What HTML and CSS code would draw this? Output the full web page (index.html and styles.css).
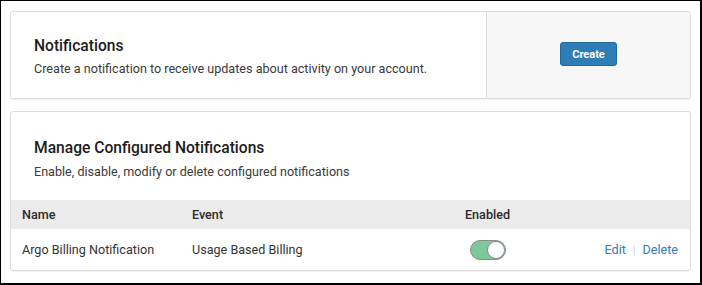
FILE: index.html
```html
<!DOCTYPE html>
<html>
<head>
<meta charset="utf-8">
<link rel="stylesheet" href="styles.css">
</head>
<body>
<div class="frame">
  <section class="card intro">
    <div class="intro-main">
      <h2 class="title">Notifications</h2>
      <p class="desc">Create a notification to receive updates about activity on your account.</p>
    </div>
    <div class="intro-side">
      <button class="btn">Create</button>
    </div>
  </section>
  <section class="card manage">
    <div class="manage-head">
      <h2 class="title">Manage Configured Notifications</h2>
      <p class="desc">Enable, disable, modify or delete configured notifications</p>
    </div>
    <div class="table">
      <div class="row header">
        <div class="c-name">Name</div>
        <div class="c-event">Event</div>
        <div class="c-enabled">Enabled</div>
        <div class="c-actions"></div>
      </div>
      <div class="row">
        <div class="c-name">Argo Billing Notification</div>
        <div class="c-event">Usage Based Billing</div>
        <div class="c-enabled"><span class="toggle"><span class="knob"></span></span></div>
        <div class="c-actions"><a class="link">Edit</a><span class="sep">|</span><a class="link">Delete</a></div>
      </div>
    </div>
  </section>
</div>
</body>
</html>
```

FILE: styles.css
```css
* { box-sizing: border-box; }
html, body { margin: 0; padding: 0; background: #fff; }
body {
  font-family: Roboto, "Liberation Sans", Arial, sans-serif;
  color: #333;
}
.frame {
  width: 702px;
  height: 285px;
  border-style: solid;
  border-color: #000;
  border-width: 1px 2px 2px 1px;
  padding: 10px 9px 0 9px;
  display: flex;
  flex-direction: column;
  gap: 12px;
}
.card {
  background: #fff;
  border: 1px solid #dcdcdc;
  border-radius: 3px;
  box-shadow: 0 1px 1px rgba(0,0,0,0.06);
  overflow: hidden;
}
.intro {
  display: flex;
  height: 88px;
}
.intro-main {
  flex: 1;
  padding: 24px 24px 0 23px;
}
.intro-side {
  width: 204px;
  background: #f7f7f7;
  border-left: 1px solid #dcdcdc;
  display: flex;
  align-items: flex-start;
  justify-content: center;
  padding-top: 30px;
}
.title {
  margin: 0;
  font-size: 15.6px;
  font-weight: 500;
  color: #1c1c1c;
  line-height: 20px;
}
.desc {
  margin: 4px 0 0;
  font-size: 12.6px;
  line-height: 18px;
  color: #3a3a3a;
}
.btn {
  font-family: inherit;
  width: 57px;
  height: 24px;
  background: #2e7db6;
  color: #fff;
  border: 1px solid #22679a;
  border-radius: 3px;
  font-size: 11px;
  font-weight: 700;
  padding: 0;
}
.manage {
  height: 160px;
}
.manage-head {
  padding: 26px 24px 0 23px;
  height: 88px;
}
.manage-head .desc { margin-top: 5px; }
.row {
  display: grid;
  grid-template-columns: 170px 273px 1fr 150px;
  align-items: center;
  font-size: 12.6px;
  padding: 0 12px 0 11px;
}
.row.header {
  background: #ebebeb;
  height: 29px;
  font-weight: 500;
  color: #2a2a2a;
}
.row:not(.header) { height: 41px; }
.c-actions { text-align: right; }
.link { color: #2f7cb8; }
.sep { color: #ccc; margin: 0 7px; font-size: 11px; }
.toggle {
  display: inline-block;
  width: 36px;
  height: 20px;
  border-radius: 10px;
  background: #7cc89b;
  border: 1px solid #8a8a8a;
  position: relative;
  vertical-align: middle;
  margin-left: 5px;
}
.knob {
  position: absolute;
  right: 0;
  top: 0;
  width: 18px;
  height: 18px;
  border-radius: 50%;
  background: #fff;
  border: 1px solid #8a8a8a;
}
```
